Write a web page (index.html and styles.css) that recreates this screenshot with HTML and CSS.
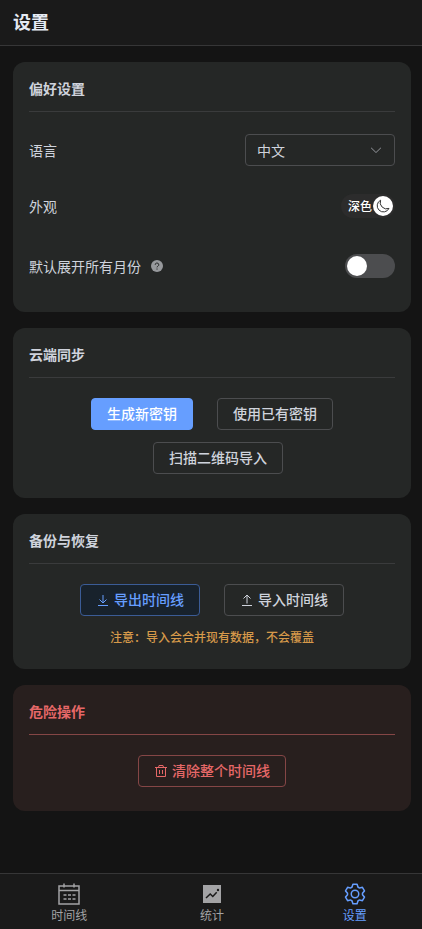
FILE: index.html
```html
<!DOCTYPE html>
<html lang="zh-CN">
<head>
<meta charset="utf-8">
<meta name="viewport" content="width=device-width, initial-scale=1">
<title>设置</title>
<link rel="stylesheet" href="styles.css">
</head>
<body>
<header class="topbar"><h1>设置</h1></header>
<main class="content">
  <section class="card">
    <h2>偏好设置</h2>
    <div class="prefs">
      <div class="row">
        <label for="lang">语言</label>
        <div class="select">
          <select id="lang"><option>中文</option></select>
          <svg class="arrow" viewBox="0 0 1024 1024" aria-hidden="true"><path d="M831.9 340.9 512 652.7 192.1 340.9a30.6 30.6 0 0 0-42.7 0 29.1 29.1 0 0 0 0 41.6L489.7 714.2a32 32 0 0 0 44.6 0l340.3-331.6a29.1 29.1 0 0 0 0-41.7 30.6 30.6 0 0 0-42.7 0z"/></svg>
        </div>
      </div>
      <div class="row">
        <label for="theme">外观</label>
        <div class="switch theme">
          <input type="checkbox" id="theme" checked>
          <span class="state">深色</span>
          <span class="knob"><svg viewBox="0 0 16 16" aria-hidden="true"><path d="M5.600 2.200A6.200 6.200 0 1 0 14 10.400 6.400 6.400 0 0 1 5.600 2.200z"/></svg></span>
        </div>
      </div>
      <div class="row tall">
        <div class="label-group">
          <label for="expand">默认展开所有月份</label>
          <svg class="help" viewBox="0 0 12 12" aria-hidden="true"><circle cx="6" cy="6" r="6"/><path d="M4.2 4.8a1.8 1.7 0 1 1 2.7 1.4Q6 6.7 6 7.4M6 8.5v1.1"/></svg>
        </div>
        <div class="switch expand">
          <input type="checkbox" id="expand">
          <span class="knob"></span>
        </div>
      </div>
    </div>
  </section>

  <section class="card">
    <h2>云端同步</h2>
    <div class="actions">
      <button class="btn solid">生成新密钥</button>
      <button class="btn">使用已有密钥</button>
      <button class="btn">扫描二维码导入</button>
    </div>
  </section>

  <section class="card">
    <h2>备份与恢复</h2>
    <div class="actions backup">
      <button class="btn primary"><svg viewBox="0 0 14 14" aria-hidden="true"><path d="M7 2v8M3.5 6.5 7 10l3.5-3.5M2 12.5h10"/></svg>导出时间线</button>
      <button class="btn"><svg viewBox="0 0 14 14" aria-hidden="true"><path d="M7 10.5V2M3.5 5.5 7 2l3.5 3.5M2 12.5h10"/></svg>导入时间线</button>
    </div>
    <p class="note">注意：导入会合并现有数据，不会覆盖</p>
  </section>

  <section class="card danger">
    <h2>危险操作</h2>
    <div class="actions">
      <button class="btn"><svg viewBox="0 0 14 14" aria-hidden="true"><path d="M1 3.5h12M2.5 3.5v9h9v-9M4.5 3.5 5 1.5h4l.5 2M5.5 6v4M8.5 6v4"/></svg>清除整个时间线</button>
    </div>
  </section>
</main>
<nav class="tabs">
  <a href="#timeline"><svg class="calendar" viewBox="0 0 24 24" aria-hidden="true"><path d="M2 4h20v18H2zM2 8.500h20M7 1.500v4M17 1.500v4"/><path d="M6.500 13h3M11 13h3M15.500 13h3M6.500 17h3M11 17h3M15.500 17h3"/></svg>时间线</a>
  <a href="#stats"><svg viewBox="0 0 24 24" aria-hidden="true"><path class="fill" d="M3 3h18v18H3z"/><path class="cut" d="m6 16 4.200-4 2.600 2.500 3.900-4.200"/><circle class="dot" cx="18" cy="8" r="1.200"/></svg>统计</a>
  <a href="#settings" class="active" aria-current="page"><svg viewBox="0 0 1024 1024" aria-hidden="true"><path class="fill" d="M600.700 64a32 32 0 0 1 30.500 22.200l35.200 109.400c14.800 7.200 29 15.400 42.400 24.500l112.400-24.200a32 32 0 0 1 34.400 15.300L944.300 364.800a32 32 0 0 1-4 37.500l-77.100 85.100a357.100 357.100 0 0 1 0 49l77.100 85.200a32 32 0 0 1 4 37.500l-88.700 153.600a32 32 0 0 1-34.400 15.300L708.800 803.900c-13.400 9.100-27.600 17.300-42.400 24.600l-35.300 109.400A32 32 0 0 1 600.700 960H423.300a32 32 0 0 1-30.500-22.200L357.700 828.500a351.600 351.600 0 0 1-42.600-24.600l-112.400 24.200a32 32 0 0 1-34.400-15.300L79.700 659.200a32 32 0 0 1 4-37.500l77.100-85.200a357.100 357.100 0 0 1 0-48.900l-77.100-85.200a32 32 0 0 1-4-37.500l88.700-153.600a32 32 0 0 1 34.400-15.300l112.400 24.200c13.400-9.200 27.600-17.400 42.500-24.600l35.200-109.400A32 32 0 0 1 423.200 64h177.400zm-23.400 64H446.700l-36.400 113.100-24.500 11.900a294.100 294.100 0 0 0-34.800 20.100l-22.700 15.400-116.300-25-65.300 113.200 79.700 88.200-2 27.100a293.100 293.100 0 0 0 0 40.200l2 27.100-79.800 88.200 65.300 113.200 116.300-25 22.700 15.300a294.100 294.100 0 0 0 34.800 20.100l24.500 11.900L446.700 896h130.700l36.500-113.200 24.400-11.800a288.300 288.300 0 0 0 34.800-20.100l22.600-15.300 116.300 25 65.300-113.200-79.700-88.200 2-27.100a293.100 293.100 0 0 0 0-40.300l-2-27.100 79.800-88.100-65.300-113.200-116.300 24.900-22.600-15.200a287.600 287.600 0 0 0-34.800-20.100l-24.400-11.900L577.300 128zM512 320a192 192 0 1 1 0 384 192 192 0 0 1 0-384zm0 64a128 128 0 1 0 0 256 128 128 0 0 0 0-256z"/></svg>设置</a>
</nav>
</body>
</html>
```
FILE: styles.css
```css
* { box-sizing: border-box; }

body {
  margin: 0;
  min-height: 100vh;
  display: flex;
  flex-direction: column;
  background: #141414;
  color: #cfd3dc;
  font: 14px/24px "Noto Sans CJK SC", sans-serif;
}

h1, h2, p { margin: 0; }

svg { flex: none; fill: none; stroke: currentColor; }

.topbar {
  padding: 9px 13px 12px;
  background: #1a1a1a;
  border-bottom: 1px solid #363637;
}

.topbar h1 {
  font-size: 18px;
  line-height: 24px;
  font-weight: 700;
  color: #e5eaf3;
}

.content {
  flex: 1;
  display: flex;
  flex-direction: column;
  gap: 16px;
  padding: 16px 11px 16px 13px;
}

.card {
  padding: 16px 16px 24px;
  border-radius: 12px;
  background: #252726;
}

.card h2 {
  padding-bottom: 12px;
  border-bottom: 1px solid #3a3b3c;
  font-size: 14px;
  line-height: 21px;
  font-weight: 700;
}

.prefs { padding-top: 10px; margin-bottom: -10px; }

.row {
  min-height: 56px;
  display: flex;
  align-items: center;
  justify-content: space-between;
}

.row.tall { min-height: 64px; }

.label-group { display: flex; align-items: center; gap: 10px; }

.help { width: 12px; height: 12px; stroke: #252726; }
.help circle { fill: #97999c; stroke: none; }

.select { position: relative; width: 150px; }

.select select {
  display: block;
  width: 100%;
  height: 32px;
  padding: 0 11px;
  appearance: none;
  border: 1px solid #4c4d4f;
  border-radius: 4px;
  background: transparent;
  color: #cfd3dc;
  font: inherit;
}

.arrow {
  position: absolute;
  right: 12px;
  top: 9px;
  width: 14px;
  height: 14px;
  fill: #8d9095;
  stroke: none;
  pointer-events: none;
}

.switch {
  position: relative;
  display: flex;
  align-items: center;
  height: 24px;
  padding: 2px;
  border-radius: 12px;
}

.switch input {
  position: absolute;
  inset: 0;
  width: 100%;
  height: 100%;
  margin: 0;
  opacity: 0;
  cursor: pointer;
}

.switch.theme { gap: 1px; padding-left: 7px; background: #2c2c2c; }
.switch.expand { width: 50px; background: #4c4d4f; }

.state { font-size: 12px; font-weight: 500; color: #fff; }

.knob {
  display: flex;
  align-items: center;
  justify-content: center;
  width: 20px;
  height: 20px;
  border-radius: 50%;
  background: #fff;
  color: #333;
}

.knob svg { width: 16px; height: 16px; }

.actions {
  display: flex;
  flex-wrap: wrap;
  justify-content: center;
  gap: 12px;
  padding-top: 20px;
}

.btn {
  display: flex;
  align-items: center;
  gap: 4px;
  height: 32px;
  padding: 0 15px 2px;
  border: 1px solid #4c4d4f;
  border-radius: 4px;
  background: transparent;
  color: #cfd3dc;
  font: 500 14px/24px "Noto Sans CJK SC", sans-serif;
}

.btn + .btn { margin-left: 12px; }

.btn svg { width: 14px; height: 14px; margin-top: 2px; }

.btn.solid { background: #669eff; border-color: #669eff; color: #fff; }
.btn.primary { background: #18222c; border-color: #3b5c96; color: #669eff; }

.note {
  padding-top: 9px;
  margin-bottom: -4px;
  font-size: 12px;
  font-weight: 500;
  text-align: center;
  color: #d6994a;
}

.danger { background: #281f1e; }
.danger h2 { color: #e66868; border-color: #854646; }
.danger .btn { color: #e66868; border-color: #854646; }

.tabs {
  position: sticky;
  bottom: 0;
  display: flex;
  gap: 8px;
  padding-left: 2px;
  background: #1a1a1a;
  border-top: 1px solid #363637;
}

.tabs a {
  flex: 1;
  display: flex;
  flex-direction: column;
  align-items: center;
  padding: 8px 0 5px;
  color: #a3a3a5;
  font-size: 12px;
  line-height: 18px;
  text-decoration: none;
}

.tabs a.active { color: #669eff; }
.tabs svg { width: 24px; height: 24px; }
.tabs .calendar { stroke-width: 1.5; }
.tabs .fill { fill: currentColor; stroke: none; }
.tabs .cut { stroke: #1a1a1a; stroke-width: 1.5; }
.tabs .dot { fill: #1a1a1a; stroke: none; }
```
